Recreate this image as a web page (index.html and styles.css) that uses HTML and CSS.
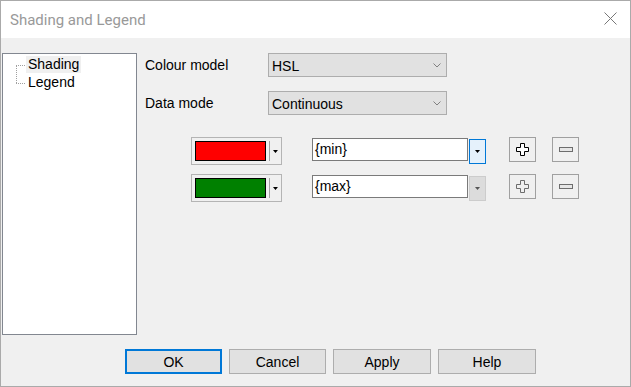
FILE: index.html
```html
<!DOCTYPE html>
<html lang="en">

<head>
  <meta charset="UTF-8">
  <meta name="viewport" content="width=device-width, initial-scale=1">
  <title>Shading and Legend</title>
  <link rel="stylesheet" href="styles.css">
</head>

<body>
  <div class="sl_window">
    <div class="sl_titlebar">
      <span class="sl_title">Shading and Legend</span>
      <svg class="sl_close" width="13" height="13" viewBox="0 0 13 13">
        <path d="M0.5 0.5 L12.5 12.5 M12.5 0.5 L0.5 12.5" stroke="#777" stroke-width="1" fill="none" />
      </svg>
    </div>

    <div class="sl_content">
      <div class="sl_main">
        <div class="sl_tree">
          <div class="sl_tree_list">
            <div class="sl_tree_item">
              <span class="sl_branch"></span>
              <span class="sl_tree_label sl_selected">Shading</span>
            </div>
            <div class="sl_tree_item">
              <span class="sl_branch"></span>
              <span class="sl_tree_label">Legend</span>
            </div>
          </div>
        </div>

        <div class="sl_form">
          <div class="sl_field">
            <span class="sl_label">Colour model</span>
            <div class="sl_combo">
              <span>HSL</span>
              <svg width="8" height="5" viewBox="0 0 8 5"><path d="M0.5 0.5 L4 4 L7.5 0.5" stroke="#808080" fill="none" /></svg>
            </div>
          </div>
          <div class="sl_field sl_field_next">
            <span class="sl_label">Data mode</span>
            <div class="sl_combo">
              <span>Continuous</span>
              <svg width="8" height="5" viewBox="0 0 8 5"><path d="M0.5 0.5 L4 4 L7.5 0.5" stroke="#808080" fill="none" /></svg>
            </div>
          </div>

          <div class="sl_stops">
            <div class="sl_stop">
              <div class="sl_picker">
                <span class="sl_swatch sl_red"></span>
                <span class="sl_sep"></span>
                <svg class="sl_arrow" width="5" height="3" viewBox="0 0 5 3"><path d="M0 0 H5 L2.5 3 Z" fill="#000" /></svg>
              </div>
              <div class="sl_input">{min}</div>
              <div class="sl_drop sl_drop_hot">
                <svg width="5" height="3" viewBox="0 0 5 3"><path d="M0 0 H5 L2.5 3 Z" fill="#000" /></svg>
              </div>
              <div class="sl_tool sl_add">
                <svg width="13" height="13" viewBox="0 0 13 13"><path d="M4.5 0.5 H8.5 V4.5 H12.5 V8.5 H8.5 V12.5 H4.5 V8.5 H0.5 V4.5 H4.5 Z" stroke="#000" fill="#fff" /></svg>
              </div>
              <div class="sl_tool sl_remove">
                <svg width="14" height="5" viewBox="0 0 14 5"><rect x="0.5" y="0.5" width="13" height="4" stroke="#6d6d6d" fill="#e6e6e6" /></svg>
              </div>
            </div>

            <div class="sl_stop sl_stop_next">
              <div class="sl_picker">
                <span class="sl_swatch sl_green"></span>
                <span class="sl_sep"></span>
                <svg class="sl_arrow" width="5" height="3" viewBox="0 0 5 3"><path d="M0 0 H5 L2.5 3 Z" fill="#000" /></svg>
              </div>
              <div class="sl_input">{max}</div>
              <div class="sl_drop sl_drop_off">
                <svg width="5" height="3" viewBox="0 0 5 3"><path d="M0 0 H5 L2.5 3 Z" fill="#555" /></svg>
              </div>
              <div class="sl_tool sl_add">
                <svg width="13" height="13" viewBox="0 0 13 13"><path d="M4.5 0.5 H8.5 V4.5 H12.5 V8.5 H8.5 V12.5 H4.5 V8.5 H0.5 V4.5 H4.5 Z" stroke="#6d6d6d" fill="#f0f0f0" /></svg>
              </div>
              <div class="sl_tool sl_remove">
                <svg width="14" height="5" viewBox="0 0 14 5"><rect x="0.5" y="0.5" width="13" height="4" stroke="#6d6d6d" fill="#e6e6e6" /></svg>
              </div>
            </div>
          </div>
        </div>
      </div>

      <div class="sl_footer">
        <button class="sl_btn sl_default">OK</button>
        <button class="sl_btn">Cancel</button>
        <button class="sl_btn sl_wide">Apply</button>
        <button class="sl_btn sl_wide">Help</button>
      </div>
    </div>
  </div>
</body>

</html>
```

FILE: styles.css
```css
html,
body {
  margin: 0;
  padding: 0;
}

body {
  width: 631px;
  height: 387px;
  font-family: "Liberation Sans", Arial, sans-serif;
  font-size: 14px;
  color: #000;
  background: #f0f0f0;
}

.sl_window {
  box-sizing: border-box;
  width: 631px;
  height: 387px;
  border: 1px solid #aaaaaa;
  display: flex;
  flex-direction: column;
}

/* title bar */
.sl_titlebar {
  height: 37px;
  background: #fff;
  display: flex;
  align-items: center;
}

.sl_title {
  font-family: Roboto, "Liberation Sans", sans-serif;
  font-size: 15px;
  color: #999999;
  padding-left: 9px;
}

.sl_close {
  margin-left: auto;
  margin-right: 13px;
  align-self: flex-start;
  margin-top: 11px;
}

/* dialog body */
.sl_content {
  flex: 1;
  background: #f0f0f0;
  padding: 15px 0 0 1px;
}

.sl_main {
  display: flex;
  align-items: flex-start;
}

.sl_tree {
  box-sizing: border-box;
  width: 135px;
  height: 282px;
  border: 1px solid #828790;
  background: #fff;
  padding: 1px 0 0 23px;
}

.sl_tree_list {
  position: relative;
}

/* vertical dotted connector */
.sl_tree_list::before {
  content: "";
  position: absolute;
  left: -10px;
  top: 10px;
  height: 18px;
  border-left: 1px dotted #a0a0a0;
}

.sl_tree_item {
  display: flex;
  align-items: center;
  height: 18px;
}

.sl_branch {
  width: 9px;
  margin-left: -10px;
  margin-right: 1px;
  border-top: 1px dotted #a0a0a0;
  margin-top: 2px;
}

.sl_tree_label {
  padding: 0 2px;
  line-height: 17px;
}

.sl_selected {
  background: #f0f0f0;
}

.sl_form {
  margin-left: 8px;
  flex: 1;
}

.sl_field {
  display: flex;
  align-items: center;
}

.sl_field_next {
  margin-top: 14px;
}

.sl_label {
  width: 123px;
}

.sl_combo {
  box-sizing: border-box;
  width: 179px;
  height: 24px;
  border: 1px solid #adadad;
  background: #e1e1e1;
  display: flex;
  align-items: center;
  justify-content: space-between;
  padding: 1px 5px 0 3px;
}

/* colour stops */
.sl_stops {
  margin-top: 22px;
  padding-left: 46px;
}

.sl_stop {
  display: flex;
  align-items: flex-start;
}

.sl_stop_next {
  margin-top: 9px;
}

.sl_picker {
  box-sizing: border-box;
  width: 91px;
  height: 28px;
  border: 1px solid #b4b4b4;
  padding: 3px;
  display: flex;
  align-items: center;
}

.sl_swatch {
  box-sizing: border-box;
  width: 72px;
  height: 20px;
  border: 1px solid #000;
}

.sl_red {
  background: #ff0000;
}

.sl_green {
  background: #008000;
}

.sl_sep {
  width: 1px;
  height: 20px;
  background: #a0a0a0;
  margin: 0 3px;
}

.sl_input {
  box-sizing: border-box;
  width: 156px;
  height: 23px;
  margin: 1px 0 0 30px;
  border: 1px solid #7a7a7a;
  background: #fff;
  padding-left: 2px;
  line-height: 21px;
}

.sl_drop {
  box-sizing: border-box;
  width: 17px;
  height: 25px;
  margin: 2px 0 0 1px;
  display: flex;
  align-items: center;
  justify-content: center;
}

.sl_drop_hot {
  border: 1px solid #0078d7;
  background: #e5f1fb;
}

.sl_drop_off {
  border: 1px solid #cccccc;
  background: #dcdcdc;
}

.sl_tool {
  box-sizing: border-box;
  width: 27px;
  height: 25px;
  border: 1px solid #a0a0a0;
  display: flex;
  align-items: center;
  justify-content: center;
}

.sl_add {
  margin-left: 23px;
}

.sl_remove {
  margin-left: 16px;
}

/* buttons */
.sl_footer {
  display: flex;
  gap: 7px;
  margin-top: 14px;
  padding-left: 123px;
}

.sl_btn {
  box-sizing: border-box;
  width: 97px;
  height: 25px;
  border: 1px solid #adadad;
  background: #e1e1e1;
  font-family: "Liberation Sans", Arial, sans-serif;
  font-size: 14px;
  color: #000;
  padding: 0;
}

.sl_wide {
  width: 98px;
}

.sl_default {
  border: 2px solid #0078d7;
}
```
